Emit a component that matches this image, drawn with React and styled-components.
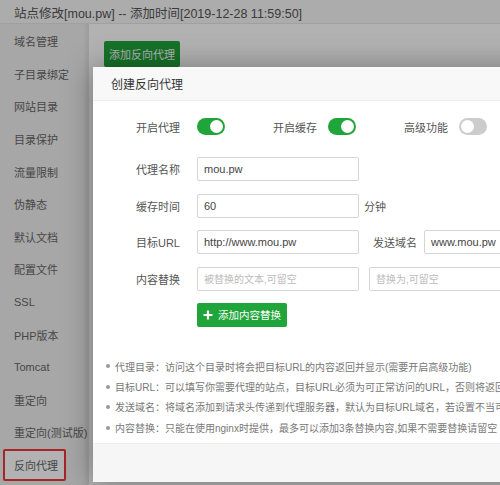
import React from "react";
import styled, { createGlobalStyle } from "styled-components";

const GlobalStyle = createGlobalStyle`
  html, body {
    margin: 0;
    padding: 0;
    overflow: hidden;
  }
  body {
    font-family: "Liberation Sans", "Noto Sans CJK SC", sans-serif;
  }
`;

const menu = [
  "域名管理",
  "子目录绑定",
  "网站目录",
  "目录保护",
  "流量限制",
  "伪静态",
  "默认文档",
  "配置文件",
  "SSL",
  "PHP版本",
  "Tomcat",
  "重定向",
  "重定向(测试版)",
  "反向代理",
];

const notes = [
  "代理目录：访问这个目录时将会把目标URL的内容返回并显示(需要开启高级功能)",
  "目标URL：可以填写你需要代理的站点，目标URL必须为可正常访问的URL，否则将返回错误",
  "发送域名：将域名添加到请求头传递到代理服务器，默认为目标URL域名，若设置不当可能导致代理无法正常运行",
  "内容替换：只能在使用nginx时提供，最多可以添加3条替换内容,如果不需要替换请留空",
];

function App() {
  return (
    <Page>
      <GlobalStyle />
      <TitleBar>站点修改[mou.pw] -- 添加时间[2019-12-28 11:59:50]</TitleBar>
      <Content>
        <Sidebar>
          {menu.map((m) => (
            <MenuItem key={m} active={m === "反向代理"}>
              {m}
            </MenuItem>
          ))}
        </Sidebar>
        <Main>
          <GreenButton>添加反向代理</GreenButton>
        </Main>
      </Content>

      <Overlay />

      <Modal>
        <ModalHeader>创建反向代理</ModalHeader>
        <ModalBody>
          <SwitchRow>
            <Label>开启代理</Label>
            <Switch on />
            <SwitchGroup>
              <SwitchLabel>开启缓存</SwitchLabel>
              <Switch on />
            </SwitchGroup>
            <SwitchGroup>
              <SwitchLabel>高级功能</SwitchLabel>
              <Switch />
            </SwitchGroup>
          </SwitchRow>

          <FormRow>
            <Label>代理名称</Label>
            <Input defaultValue="mou.pw" />
          </FormRow>
          <FormRow>
            <Label>缓存时间</Label>
            <Input defaultValue="60" />
            <Unit>分钟</Unit>
          </FormRow>
          <FormRow>
            <Label>目标URL</Label>
            <Input defaultValue="http://www.mou.pw" />
            <InlineLabel>发送域名</InlineLabel>
            <Input defaultValue="www.mou.pw" />
          </FormRow>
          <FormRow>
            <Label>内容替换</Label>
            <Input placeholder="被替换的文本,可留空" />
            <Input placeholder="替换为,可留空" gap={10} />
          </FormRow>

          <ButtonRow>
            <AddButton>
              <svg width="10" height="10" viewBox="0 0 10 10">
                <path d="M5 0.5v9M0.5 5h9" stroke="#fff" strokeWidth="2.2" />
              </svg>
              添加内容替换
            </AddButton>
          </ButtonRow>

          <Notes>
            {notes.map((n) => (
              <Note key={n}>{n}</Note>
            ))}
          </Notes>
        </ModalBody>
        <ModalFooter />
      </Modal>
    </Page>
  );
}

export default App;

const Page = styled.div`
  position: relative;
  width: 500px;
  height: 485px;
  overflow: hidden;
  background: #fff;
`;

const TitleBar = styled.div`
  height: 24px;
  box-sizing: border-box;
  padding: 3px 0 0 14px;
  font-size: 12.5px;
  color: #555;
  background: #f7f7f7;
  border-bottom: 1px solid #e6e6e6;
  white-space: nowrap;
`;

const Content = styled.div`
  display: flex;
  height: 461px;
`;

const Sidebar = styled.div`
  width: 88px;
  flex-shrink: 0;
  padding-top: 1px;
  background: #f0f0f0;
  border-right: 1px solid #e2e2e2;
  box-shadow: inset -4px 0 6px -4px rgba(0, 0, 0, 0.12);
`;

const MenuItem = styled.div`
  height: 32.6px;
  box-sizing: border-box;
  display: flex;
  align-items: center;
  font-size: 11px;
  color: #666;
  white-space: nowrap;
  background: ${(p) => (p.active ? "#fff" : "transparent")};
  border: ${(p) => (p.active ? "2px solid #f0343a" : "none")};
  border-radius: ${(p) => (p.active ? "2px" : "0")};
  width: ${(p) => (p.active ? "63px" : "auto")};
  margin-left: ${(p) => (p.active ? "3px" : "0")};
  padding-left: ${(p) => (p.active ? "9px" : "14px")};
`;

const Main = styled.div`
  flex: 1;
  padding: 17px 0 0 15px;
`;

const GreenButton = styled.div`
  display: inline-flex;
  align-items: center;
  justify-content: center;
  width: 76px;
  height: 26px;
  background: #20a53a;
  color: #fff;
  font-size: 11px;
  border-radius: 2px;
`;

const Overlay = styled.div`
  position: absolute;
  inset: 0;
  background: rgba(0, 0, 0, 0.3);
`;

const Modal = styled.div`
  position: absolute;
  left: 93px;
  top: 67px;
  width: 620px;
  height: 415px;
  background: #fff;
  display: flex;
  flex-direction: column;
  box-shadow: 0 0 28px rgba(0, 0, 0, 0.35);
`;

const ModalHeader = styled.div`
  height: 34px;
  box-sizing: border-box;
  display: flex;
  align-items: center;
  padding-left: 18px;
  font-size: 12px;
  color: #333;
  background: #f8f8f8;
  border-bottom: 1px solid #eee;
`;

const ModalBody = styled.div`
  flex: 1;
  padding-top: 17px;
`;

const SwitchRow = styled.div`
  display: flex;
  align-items: center;
  height: 17px;
  margin-bottom: 22px;
`;

const Label = styled.div`
  width: 87px;
  margin-right: 17px;
  text-align: right;
  font-size: 11px;
  color: #555;
  flex-shrink: 0;
`;

const SwitchGroup = styled.div`
  display: flex;
  align-items: center;
  margin-left: 48px;
`;

const SwitchLabel = styled.div`
  font-size: 11px;
  color: #555;
  margin-right: 11px;
  white-space: nowrap;
`;

const Switch = styled.div`
  position: relative;
  width: 28px;
  height: 17px;
  border-radius: 9px;
  flex-shrink: 0;
  background: ${(p) => (p.on ? "#20a53a" : "#ccc")};

  &::after {
    content: "";
    position: absolute;
    top: 2px;
    left: ${(p) => (p.on ? "13px" : "2px")};
    width: 13px;
    height: 13px;
    border-radius: 50%;
    background: #fff;
  }
`;

const FormRow = styled.div`
  display: flex;
  align-items: center;
  height: 24px;
  margin-bottom: 12.6px;
`;

const Input = styled.input`
  width: 162px;
  height: 24px;
  box-sizing: border-box;
  flex-shrink: 0;
  margin: 0 0 0 ${(p) => (p.gap ? `${p.gap}px` : "0")};
  padding: 0 6px;
  border: 1px solid #d5d5d5;
  border-radius: 2px;
  font-family: "Liberation Sans", "Noto Sans CJK SC", sans-serif;
  font-size: 11px;
  color: #444;
  outline: none;

  &::placeholder {
    color: #bbb;
    font-size: 10px;
  }
`;

const Unit = styled.span`
  margin-left: 5px;
  font-size: 11px;
  color: #555;
`;

const InlineLabel = styled.span`
  margin: 0 7px 0 14px;
  font-size: 11px;
  color: #555;
  white-space: nowrap;
`;

const ButtonRow = styled.div`
  padding-left: 104px;
  margin-top: -0.5px;
`;

const AddButton = styled.div`
  display: inline-flex;
  align-items: center;
  justify-content: center;
  gap: 5px;
  width: 90px;
  height: 24px;
  background: #20a53a;
  color: #fff;
  font-size: 10.5px;
  border-radius: 2px;
`;

const Notes = styled.ul`
  list-style: none;
  margin: 29px 0 0 0;
  padding: 0 0 0 13px;
`;

const Note = styled.li`
  position: relative;
  height: 20.4px;
  display: flex;
  align-items: center;
  padding-left: 9px;
  font-size: 10px;
  color: #777;
  white-space: nowrap;

  &::before {
    content: "";
    position: absolute;
    left: 0;
    top: 8.5px;
    width: 4px;
    height: 4px;
    border-radius: 50%;
    background: #999;
  }
`;

const ModalFooter = styled.div`
  height: 38px;
  flex-shrink: 0;
  background: #f6f6f6;
  border-top: 1px solid #eee;
`;
